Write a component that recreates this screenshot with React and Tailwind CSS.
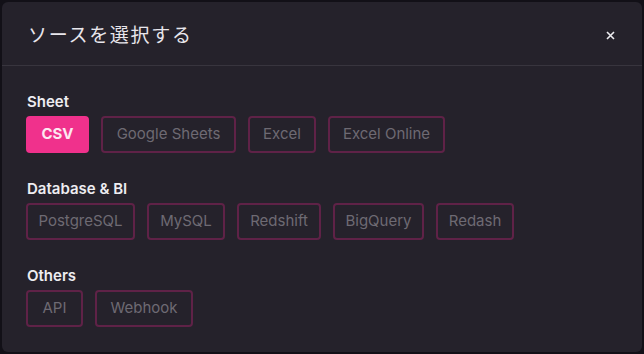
const sections = [
  {
    title: "Sheet",
    items: [
      { label: "CSV", w: "w-[63px]" },
      { label: "Google Sheets", w: "w-[135px]" },
      { label: "Excel", w: "w-[68px]" },
      { label: "Excel Online", w: "w-[117px]" },
    ],
  },
  {
    title: "Database & BI",
    items: [
      { label: "PostgreSQL", w: "w-[109px]" },
      { label: "MySQL", w: "w-[78px]" },
      { label: "Redshift", w: "w-[84px]" },
      { label: "BigQuery", w: "w-[91px]" },
      { label: "Redash", w: "w-[78px]" },
    ],
  },
  {
    title: "Others",
    items: [
      { label: "API", w: "w-[57px]" },
      { label: "Webhook", w: "w-[98px]" },
    ],
  },
];

export default function App() {
  const selected = "CSV";

  return (
    <div className="h-[354px] w-[644px] bg-[#121017] p-[2px]" style={{ fontFamily: "Inter, 'Noto Sans CJK JP', sans-serif" }}>
      <div className="h-full w-full rounded-md bg-[#25222b] flex flex-col">
        {/* Header */}
        <div className="h-[64px] flex items-center justify-between pl-[26px] pr-[27px] border-b border-[#38353e]">
          <h1
            className="text-[19px] tracking-[1.7px] text-[#e8e6ec] pt-[1px]"
            style={{ fontFamily: "'Noto Sans CJK JP', sans-serif" }}
          >
            ソースを選択する
          </h1>
          <svg width="9" height="9" viewBox="0 0 9 9" className="mt-[3px]">
            <path d="M1 1 8 8M8 1 1 8" stroke="#ecebef" strokeWidth="1.6" />
          </svg>
        </div>

        {/* Body */}
        <div className="flex flex-col gap-[27px] px-[24px] pt-[27px]">
          {sections.map((section) => (
            <div key={section.title} className="flex flex-col gap-[5px]">
              <h2 className="text-[15px] font-semibold text-[#eeedf1] leading-[18px] pl-[1px]">{section.title}</h2>
              <div className="flex gap-[12px]">
                {section.items.map((item) =>
                  item.label === selected ? (
                    <button
                      key={item.label}
                      className={`${item.w} h-[37px] rounded-[4px] bg-[#f0318c] text-[15px] font-bold text-[#fde7f1]`}
                    >
                      {item.label}
                    </button>
                  ) : (
                    <button
                      key={item.label}
                      className={`${item.w} h-[37px] rounded-[4px] border-2 border-[#5f2247] text-[15px] text-[#6e6a73]`}
                    >
                      {item.label}
                    </button>
                  )
                )}
              </div>
            </div>
          ))}
        </div>
      </div>
    </div>
  );
}
